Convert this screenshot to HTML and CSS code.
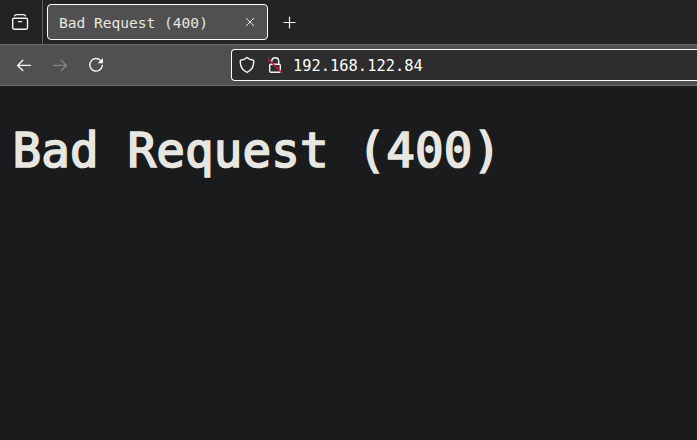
FILE: index.html
```html
<!DOCTYPE html>
<html lang="en">
<head>
<meta charset="utf-8">
<title>Bad Request (400)</title>
<link rel="stylesheet" href="styles.css">
</head>
<body>
<div class="tabs">
  <div class="recent">
    <svg class="icon" width="18" height="18" viewBox="0 0 18 18"><path d="M3.6 2.8Q4 1.6 5.4 1.6H12.6Q14 1.6 14.4 2.8"/><rect x="1.7" y="5.2" width="14.8" height="11" rx="1.4"/><path d="M7.5 8.6H10.7"/></svg>
  </div>
  <div class="tab">
    <span class="tab-title">Bad Request (400)</span>
    <svg class="icon close" width="10" height="10" viewBox="0 0 10 10"><path d="M1.2 1.2 8.8 8.8M8.8 1.2 1.2 8.8"/></svg>
  </div>
  <svg class="icon plus" width="14" height="14" viewBox="0 0 14 14"><path d="M6.5 1V12M1 6.5H12"/></svg>
</div>
<div class="toolbar">
  <div class="nav">
    <svg class="icon" width="16" height="16" viewBox="0 0 16 16"><path d="M14.5 8.4H1.8M6.8 3.2 1.6 8.4 6.8 13.6"/></svg>
    <svg class="icon disabled" width="16" height="16" viewBox="0 0 16 16"><path d="M1.5 8.4H14.2M9.2 3.2 14.4 8.4 9.2 13.6"/></svg>
    <svg class="icon" width="16" height="16" viewBox="0 0 16 16"><path d="M12.7 3.6A6.3 6.3 0 1 0 14.3 8.4"/><path class="fill" d="M15 1V6.3H9.7Z"/></svg>
  </div>
  <div class="url">
    <svg class="icon" width="16" height="18" viewBox="0 0 16 18"><path d="M8 1.5C6.5 3 4 4 1.4 4.2C.8 9.8 3 14 8 16.3C13 14 15.2 9.8 14.6 4.2C12 4 9.5 3 8 1.5Z"/></svg>
    <svg class="icon lock" width="16" height="18" viewBox="0 0 16 18"><rect x="2.7" y="8.2" width="10.6" height="8" rx="1.2"/><path d="M4.8 5.2C4.8 3 6.3 1.7 8.3 1.7S11.7 3 11.7 5.2V8"/><path class="slash" d="M1.3 3.2 14.7 16.6"/></svg>
    <span class="address">192.168.122.84</span>
  </div>
</div>
<main><h1>Bad Request (400)</h1></main>
</body>
</html>
```
FILE: styles.css
```css
* { box-sizing: border-box; }
body {
  margin: 0;
  height: 440px;
  overflow: hidden;
  background: #1a1b1d;
  color: #e8e6e1;
  font-family: "DejaVu Sans Mono", "Liberation Mono", monospace;
}
.icon {
  display: block;
  flex: none;
  fill: none;
  stroke: #f4f4f4;
  stroke-width: 1.4;
  stroke-linecap: round;
  stroke-linejoin: round;
}
.fill { fill: #f4f4f4; stroke: none; }
.tabs {
  display: flex;
  height: 44px;
  background: #232323;
}
.recent {
  width: 43px;
  padding: 13px 0 0 11px;
  border-right: 1px solid #626262;
}
.tab {
  display: flex;
  align-items: center;
  justify-content: space-between;
  width: 221px;
  height: 36px;
  margin: 4px 0 0 4px;
  padding: 0 12px 0 11px;
  border: 1px solid #fff;
  border-radius: 4px;
  background: #505050;
}
.tab-title {
  font-size: 14.55px;
  line-height: 20px;
  white-space: pre;
  padding-top: 2px;
}
.close { stroke-width: 0.9; }
.plus { margin: 16px 0 0 15px; stroke-width: 1.2; }
.toolbar {
  display: flex;
  height: 42px;
  border-top: 1px solid #6b6b6b;
  border-bottom: 1px solid #6b6b6b;
  background: #505050;
}
.nav {
  display: flex;
  gap: 20px;
  width: 231px;
  padding: 12px 0 0 16px;
}
.disabled { stroke: #858585; }
.url {
  display: flex;
  align-items: center;
  flex: 1;
  height: 32px;
  margin-top: 4px;
  padding-left: 7px;
  border: 1px solid #fff;
  border-right: 0;
  border-radius: 4px 0 0 4px;
  background: #2d2d2d;
}
.lock { margin-left: 12px; }
.slash { stroke: #e2143f; }
.address {
  margin-left: 10px;
  padding-top: 2px;
  color: #fff;
  font-size: 15.4px;
  line-height: 20px;
}
main { padding: 33px 12.5px; }
h1 {
  margin: 0;
  font-size: 47.5px;
  font-weight: 400;
  line-height: 64px;
  letter-spacing: 0.15px;
  white-space: nowrap;
  -webkit-text-stroke: 1.7px #e8e6e1;
}
```
